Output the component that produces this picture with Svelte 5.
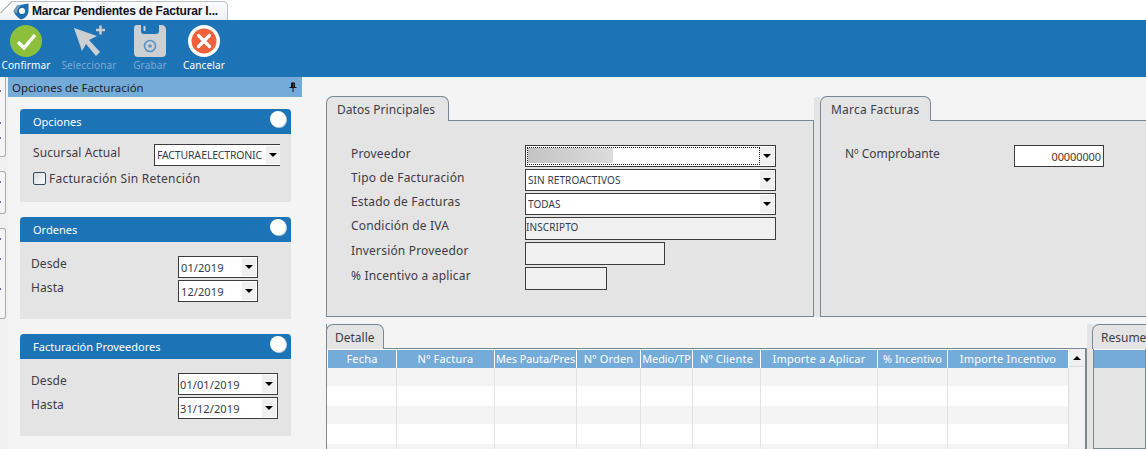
<script>
  const columns = [
    { label: "Fecha", w: 70 },
    { label: "Nº Factura", w: 98 },
    { label: "Mes Pauta/Pres", w: 82, tight: true },
    { label: "Nº Orden", w: 64 },
    { label: "Medio/TP", w: 52, tight: true },
    { label: "Nº Cliente", w: 68 },
    { label: "Importe a Aplicar", w: 117 },
    { label: "% Incentivo", w: 70, tight: true },
    { label: "Importe Incentivo", w: 121 }
  ];
  const rows = [18, 20, 18, 20, 18];
  const railTabs = [
    { h: 80, marks: [13, 45, 60] },
    { h: 43, marks: [9, 29] },
    { h: 91, marks: [9, 29, 59] }
  ];
</script>

{#snippet arrow()}
  <span class="arrow"><i></i></span>
{/snippet}

{#snippet group(title)}
  <div class="group-head">
    <span>{title}</span>
    <b class="dot"></b>
  </div>
{/snippet}

<div class="window">
  <div class="tabbar">
    <div class="doc-tab">
      <svg class="logo" width="16" height="17" viewBox="0 0 16 17">
        <path d="M4 2.5 L15.5 0.5 L15.5 9 Q14 15 8 16.5 Q3 14 0.5 8 Z" fill="#1c6fae" />
        <path d="M4 2.5 L9 1.6 Q4.5 4 3.8 10.5 L0.5 8 Z" fill="#7f9fb8" />
        <circle cx="9" cy="8" r="3" fill="#fff" />
      </svg>
      <span>Marcar Pendientes de Facturar I...</span>
    </div>
  </div>

  <div class="toolbar">
    <div class="tool" style="width:52px">
      <svg width="32" height="32" viewBox="0 0 32 32">
        <circle cx="16" cy="16" r="16" fill="#8cc03c" />
        <path d="M8 17 L14 23 L25 10" fill="none" stroke="#fff" stroke-width="3.4" />
      </svg>
      <span>Confirmar</span>
    </div>
    <div class="tool off" style="width:74px">
      <svg width="32" height="32" viewBox="0 0 32 32">
        <path d="M1 3 L24 11 L16 15 L27 27 L23 31 L13 19 L9 26 Z" fill="#cdd0d3" />
        <path d="M23 5 H32 M27.5 0.5 V9.5" stroke="#cdd0d3" stroke-width="2.4" />
      </svg>
      <span>Seleccionar</span>
    </div>
    <div class="tool off" style="width:48px">
      <svg width="32" height="32" viewBox="0 0 32 32">
        <path d="M3 0 H7 V6 Q7 9 10 9 H22 Q25 9 25 6 V0 H27 Q32 0 32 5 V28 Q32 32 28 32 H4 Q0 32 0 28 V3 Q0 0 3 0 Z" fill="#cdd0d3" />
        <rect x="9.5" y="1" width="2" height="5" fill="#cdd0d3" />
        <circle cx="16" cy="21" r="5.5" fill="none" stroke="#5b93c2" stroke-width="1.6" />
        <circle cx="16" cy="21" r="1.8" fill="#5b93c2" />
      </svg>
      <span>Grabar</span>
    </div>
    <div class="tool" style="width:60px">
      <svg width="32" height="32" viewBox="0 0 32 32">
        <circle cx="16" cy="16" r="16" fill="#fff" />
        <circle cx="16" cy="16" r="12.5" fill="#f0603a" />
        <path d="M10.5 10.5 L21.5 21.5 M21.5 10.5 L10.5 21.5" stroke="#fff" stroke-width="3.2" stroke-linecap="round" />
      </svg>
      <span>Cancelar</span>
    </div>
  </div>

  <div class="body">
    <div class="rail">
      {#each railTabs as t}
        <div class="rail-tab" style="height:{t.h}px">
          {#each t.marks as m}
            <i class="mark" style="top:{m}px"></i>
          {/each}
        </div>
      {/each}
    </div>

    <aside class="side">
      <div class="side-head">
        <span>Opciones de Facturación</span>
        <svg width="8" height="10" viewBox="0 0 8 10">
          <path d="M2 0.5 H6 V5 H7.5 V6 H4.5 V10 H3.5 V6 H0.5 V5 H2 Z M4.6 1.5 V5 H5 V1.5 Z" fill="#111" fill-rule="evenodd" />
        </svg>
      </div>

      <section class="group g-opciones">
        {@render group("Opciones")}
        <div class="group-body">
          <div class="line sucursal">
            <label>Sucursal Actual</label>
            <div class="field sucursal-field"><em>FACTURA ELECTRONIC</em>{@render arrow()}</div>
          </div>
          <div class="check-line">
            <span class="check"></span>
            <label>Facturación Sin Retención</label>
          </div>
        </div>
      </section>

      <section class="group g-fechas">
        {@render group("Ordenes")}
        <div class="group-body dates">
          <div class="line"><label>Desde</label><div class="field date"><em>01/2019</em>{@render arrow()}</div></div>
          <div class="line"><label>Hasta</label><div class="field date"><em>12/2019</em>{@render arrow()}</div></div>
        </div>
      </section>

      <section class="group g-fechas g-prov">
        {@render group("Facturación Proveedores")}
        <div class="group-body dates">
          <div class="line"><label>Desde</label><div class="field date wide"><em>01/01/2019</em>{@render arrow()}</div></div>
          <div class="line"><label>Hasta</label><div class="field date wide"><em>31/12/2019</em>{@render arrow()}</div></div>
        </div>
      </section>
    </aside>

    <main class="main">
      <div class="top">
        <div class="tabbed datos">
          <div class="tab">Datos Principales</div>
          <div class="pane form">
            <div class="row">
              <label>Proveedor</label>
              <div class="field"><div class="focus"><span class="blur"></span></div>{@render arrow()}</div>
            </div>
            <div class="row">
              <label>Tipo de Facturación</label>
              <div class="field"><em>SIN RETROACTIVOS</em>{@render arrow()}</div>
            </div>
            <div class="row">
              <label>Estado de Facturas</label>
              <div class="field"><em>TODAS</em>{@render arrow()}</div>
            </div>
            <div class="row">
              <label>Condición de IVA</label>
              <div class="field ro"><em>INSCRIPTO</em></div>
            </div>
            <div class="row">
              <label>Inversión Proveedor</label>
              <div class="field ro inv"></div>
            </div>
            <div class="row">
              <label>% Incentivo a aplicar</label>
              <div class="field ro inc"></div>
            </div>
          </div>
        </div>
        <div class="gutter"></div>
        <div class="tabbed marca">
          <div class="tab">Marca Facturas</div>
          <div class="pane marca-pane">
            <label>Nº Comprobante</label>
            <div class="field num"><em>00000000</em></div>
          </div>
        </div>
      </div>

      <div class="bottom">
        <div class="detalle">
          <div class="tab small">Detalle</div>
          <div class="grid-wrap">
            <div class="grid">
              <div class="grid-head">
                {#each columns as c}
                  <div class="th" class:tight={c.tight} style="width:{c.w}px">{c.label}</div>
                {/each}
              </div>
              {#each rows as h, i}
                <div class="tr" class:odd={i % 2 == 0} style="height:{h}px">
                  {#each columns as c}
                    <div class="td" style="width:{c.w}px"></div>
                  {/each}
                </div>
              {/each}
            </div>
            <div class="scroll">
              <div class="scroll-btn"><i></i></div>
              <div class="scroll-track"></div>
            </div>
          </div>
        </div>
        <div class="gutter low"></div>
        <div class="resumen">
          <div class="tab small">Resumen</div>
          <div class="resumen-pane"><div class="resumen-head"></div></div>
        </div>
      </div>
    </main>
  </div>
</div>

<style>
  :global(body) {
    margin: 0;
    background: #f4f4f4;
  }

  .window {
    width: 1146px;
    height: 449px;
    overflow: hidden;
    font-family: "Noto Sans", sans-serif;
    font-size: 12px;
    color: #3c3c46;
    display: flex;
    flex-direction: column;
  }

  .tabbar {
    height: 20px;
    background: #fff;
    flex: none;
  }
  .doc-tab {
    width: 228px;
    height: 19px;
    box-sizing: border-box;
    margin-top: 1px;
    border: 1px solid #b9c0c6;
    border-left: none;
    border-bottom: none;
    border-radius: 0 5px 0 0;
    background: linear-gradient(#fbfbfb, #eef1f4);
    display: flex;
    align-items: center;
    padding-left: 13px;
    gap: 3px;
    font-family: "Liberation Sans", sans-serif;
    font-weight: bold;
    font-size: 12px;
    letter-spacing: -0.18px;
    color: #10101c;
    white-space: nowrap;
    position: relative;
  }
  .doc-tab::before {
    content: "";
    position: absolute;
    left: 0;
    top: -1px;
    width: 12px;
    height: 12px;
    background: linear-gradient(to bottom right, #fff 47%, #b9c0c6 48%, #b9c0c6 56%, #fafbfb 57%);
  }
  .logo { flex: none; position: relative; }

  .toolbar {
    height: 57px;
    flex: none;
    background: #1c73b6;
    display: flex;
  }
  .tool {
    display: flex;
    flex-direction: column;
    align-items: center;
    padding-top: 5px;
    box-sizing: border-box;
    color: #fff;
    font-size: 10px;
    letter-spacing: 0.15px;
    line-height: 14px;
    gap: 1px;
    white-space: nowrap;
  }
  .tool.off { color: #7fa9cf; }

  .body {
    flex: 1;
    display: flex;
    min-height: 0;
  }

  .rail {
    width: 8px;
    flex: none;
    background: #f0f0f0;
    display: flex;
    flex-direction: column;
    gap: 14px;
  }
  .rail-tab {
    width: 6px;
    box-sizing: border-box;
    border: 1px solid #aaa;
    border-left: none;
    border-radius: 0 3px 3px 0;
    background: #f4f4f4;
    position: relative;
  }
  .rail-tab:first-child { border-top: none; border-radius: 0 0 3px 0; }
  .mark {
    position: absolute;
    left: 0;
    width: 1px;
    height: 2px;
    background: #6a62b8;
  }

  .side {
    width: 294px;
    flex: none;
  }
  .side-head {
    height: 20px;
    background: #75abd9;
    color: #1d2129;
    display: flex;
    align-items: center;
    justify-content: space-between;
    padding: 0 5px 0 4px;
    font-size: 11.4px;
  }

  .group {
    margin: 12px 11px 0 12px;
    background: #e4e4e4;
    height: 93px;
  }
  .g-fechas { margin-top: 15px; height: 102px; }
  .g-prov { height: 102px; }
  .group-head {
    height: 25px;
    background: #1c73b6;
    border-radius: 4px 4px 0 0;
    color: #fff;
    font-size: 11px;
    display: flex;
    align-items: center;
    justify-content: space-between;
    padding: 0 5px 0 13px;
  }
  .dot {
    width: 16px;
    height: 16px;
    margin-top: -5px;
    border-radius: 50%;
    background: #fff;
    box-shadow: 1px 1px 0 #bcd2e6;
  }
  .line {
    display: flex;
    align-items: flex-start;
    justify-content: space-between;
  }
  .group-body.dates {
    padding: 14px 0 0 11px;
    display: flex;
    flex-direction: column;
    gap: 2px;
  }
  .dates .line { padding-right: 33px; }
  .dates .line label { margin-top: -1px; letter-spacing: 0.1px; }
  .g-prov .dates .line { padding-right: 13px; }
  .sucursal { padding: 10px 11px 0 13px; }
  .sucursal label { line-height: 22px; letter-spacing: 0.1px; }
  .line label { line-height: 18px; }

  .check-line {
    display: flex;
    align-items: center;
    gap: 3px;
    padding: 4px 0 0 13px;
  }
  .check-line label {
    letter-spacing: 0.25px;
    padding-top: 0;
  }
  .check {
    width: 13px;
    height: 13px;
    box-sizing: border-box;
    border: 1px solid #36485a;
    border-radius: 2px;
    background: linear-gradient(135deg, #d8dde2, #fbfbfb);
  }

  .field {
    width: 251px;
    height: 22px;
    flex: none;
    box-sizing: border-box;
    border: 1px solid #3c3c3c;
    background: #fff;
    display: flex;
    align-items: center;
    justify-content: space-between;
    overflow: hidden;
    padding-left: 2px;
  }
  .field em {
    font-style: normal;
    font-size: 10px;
    letter-spacing: 0.1px;
    color: #333b4c;
    white-space: nowrap;
    overflow: hidden;
  }
  .arrow {
    width: 14px;
    height: 18px;
    flex: none;
    background: #f0f0f0;
    display: flex;
    align-items: center;
    justify-content: center;
    margin-right: 1px;
  }
  .arrow i {
    width: 0;
    height: 0;
    border: 4px solid transparent;
    border-top: 4px solid #000;
    border-bottom: none;
  }
  .sucursal-field { width: 126px; border-right: none; }
  .sucursal-field em { width: 108px; letter-spacing: -0.2px; word-spacing: -2px; font-size: 10.5px; }
  .sucursal-field .arrow { margin: 0; }
  .date { width: 80px; }
  .date em { font-size: 11px; }
  .date.wide { width: 100px; padding-left: 1px; }

  .main {
    flex: 1;
    min-width: 0;
    display: flex;
    flex-direction: column;
    padding: 19px 0 0 24px;
  }
  .top {
    display: flex;
    height: 221px;
    flex: none;
  }
  .tabbed {
    display: flex;
    flex-direction: column;
    min-width: 0;
  }
  .datos { width: 488px; flex: none; }
  .datos .tab { padding-right: 13px; letter-spacing: 0.05px; }
  .marca { flex: 1; }
  .marca .tab { letter-spacing: 0.2px; padding-right: 11px; }
  .gutter {
    width: 6px;
    flex: none;
    background: #e4e4e4;
    margin-top: 1px;
  }
  .gutter.low { margin-top: 0; }

  .tab {
    align-self: flex-start;
    height: 25px;
    flex: none;
    box-sizing: border-box;
    border: 1px solid #78898f;
    border-bottom: none;
    border-radius: 7px 7px 0 0;
    background: #e4e4e4;
    padding: 0 10px;
    display: flex;
    align-items: center;
    position: relative;
    z-index: 1;
    margin-bottom: -1px;
  }
  .pane {
    flex: 1;
    border: 1px solid #78898f;
    background: #e4e4e4;
  }
  .form {
    padding: 24px 0 0 24px;
    display: flex;
    flex-direction: column;
    gap: 2px;
  }
  .row {
    display: flex;
    height: 22px;
  }
  .row label {
    width: 174px;
    flex: none;
    line-height: 16px;
    padding-top: 1px;
    letter-spacing: 0.18px;
  }
  .row:nth-child(n + 4) { height: 23px; }
  .row .ro { height: 100%; }
  .ro { background: #f0f0f0; padding-left: 0; }
  .ro em { margin-top: -3px; }
  .inv { width: 140px; }
  .inc { width: 82px; }
  .focus {
    width: 231px;
    height: 16px;
    margin-left: -1px;
    border: 1px dotted #222;
  }
  .blur {
    display: block;
    width: 85px;
    height: 15px;
    background: linear-gradient(90deg, #c4c4c4, #dcdcdc);
  }
  .marca-pane {
    padding: 24px 0 0 24px;
    display: flex;
    border-right: none;
  }
  .marca-pane label {
    width: 169px;
    flex: none;
    line-height: 16px;
    padding-top: 1px;
  }
  .num {
    width: 90px;
    justify-content: flex-end;
    padding-right: 2px;
  }
  .num em { font-size: 11px; color: #4a3b2a; letter-spacing: -0.1px; }

  .bottom {
    display: flex;
    flex: 1;
    min-height: 0;
    padding-top: 7px;
  }
  .detalle {
    width: 760px;
    flex: none;
    display: flex;
    flex-direction: column;
    border-left: 1px solid #78898f;
    margin-left: 0;
  }
  .tab.small {
    height: 25px;
    margin-left: -1px;
    padding: 0 8px;
  }
  .grid-wrap {
    display: flex;
    border-top: 1px solid #78898f;
    border-right: 2px solid #78898f;
    flex: 1;
    min-height: 0;
  }
  .grid { width: 742px; flex: none; }
  .grid-head {
    display: flex;
    height: 19px;
    background: #75abd9;
  }
  .th {
    box-sizing: border-box;
    border-right: 1px solid #fff;
    border-top: 1px solid #fff;
    border-left: 1px solid #fff;
    margin-right: 0;
    color: #fff;
    font-size: 11px;
    letter-spacing: 0.2px;
    text-align: center;
    line-height: 18px;
    white-space: nowrap;
    overflow: hidden;
    flex: none;
  }
  .th.tight { letter-spacing: 0; font-size: 10.8px; }
  .th + .th { border-left: none; }
  .tr {
    display: flex;
    background: #fff;
  }
  .tr.odd { background: #f4f4f4; }
  .td {
    box-sizing: border-box;
    border-right: 1px solid #e2e2e2;
    flex: none;
  }
  .scroll {
    flex: 1;
    background: #f0f0f0;
    display: flex;
    flex-direction: column;
    padding: 1px;
    gap: 1px;
  }
  .scroll-btn {
    height: 15px;
    background: #f0f0f0;
    display: flex;
    align-items: center;
    justify-content: center;
  }
  .scroll-btn i {
    width: 0;
    height: 0;
    border: 4px solid transparent;
    border-bottom: 4px solid #000;
    border-top: none;
  }
  .scroll-track { flex: 1; background: #f4f4f4; border-top: 1px solid #ddd; }

  .resumen {
    flex: 1;
    min-width: 0;
    display: flex;
    flex-direction: column;
  }
  .resumen-pane {
    flex: 1;
    border: 1px solid #78898f;
    background: #e4e4e4;
  }
  .resumen-head {
    height: 18px;
    background: #75abd9;
    border-top: 1px solid #fff;
  }
</style>
